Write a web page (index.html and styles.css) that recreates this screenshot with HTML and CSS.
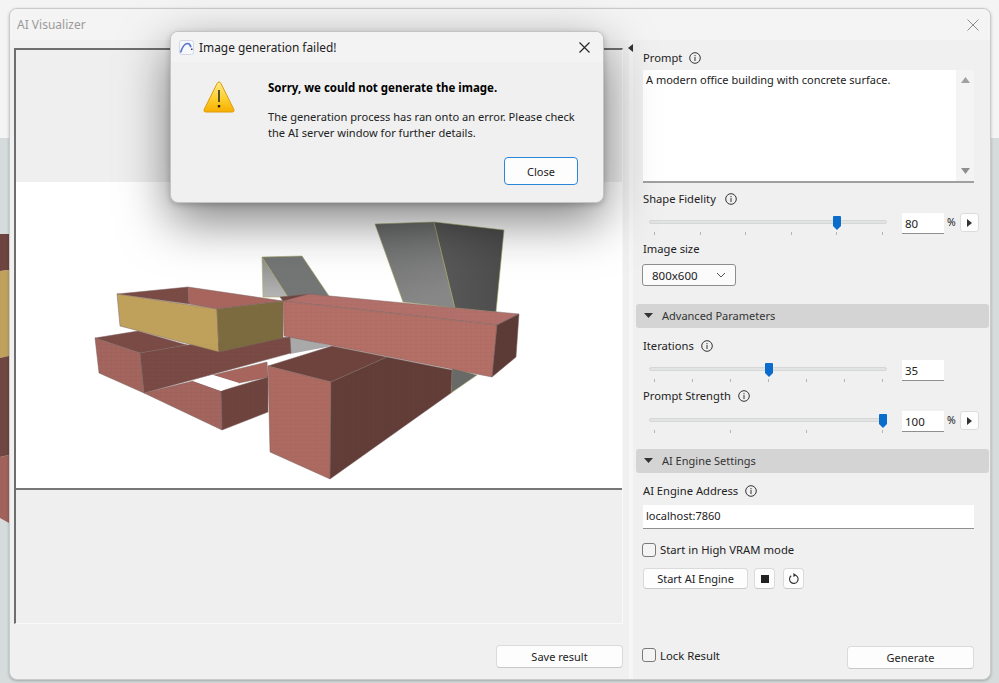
FILE: index.html
```html
<!DOCTYPE html>
<html lang="en">
<head>
<meta charset="utf-8">
<title>AI Visualizer</title>
<link rel="stylesheet" href="styles.css">
</head>
<body>
<svg class="backdrop" width="9" height="300" viewBox="0 234 9 300">
  <polygon points="0,234 9,234 9,270 0,271" fill="#6d4440"/>
  <polygon points="0,271 9,270 9,356 0,358" fill="#bfa15c"/>
  <polygon points="0,358 9,356 9,455 0,457" fill="#6f4642"/>
  <polygon points="0,457 9,455 9,523 0,518" fill="#a0625b"/>
</svg>
<main class="window">
  <header class="titlebar">
    <span class="title">AI Visualizer</span>
    <svg class="win-close" width="12" height="12" viewBox="0 0 12 12"><path d="M.5.5l11 11M11.5.5l-11 11" stroke="#8d8d8d" stroke-width="1" fill="none"/></svg>
  </header>
  <div class="body">
    <section class="left">
      <div class="preview">
        <div class="preview-top"></div>
        <svg class="scene" width="606" height="306" viewBox="16 182 606 306">
          <defs>
            <pattern id="brick" width="5" height="4" patternUnits="userSpaceOnUse">
              <path d="M0 .5h5M1 1v3" stroke="#000" stroke-opacity=".02" stroke-width="1"/>
            </pattern>
            <linearGradient id="g1" x1="0" y1="0" x2=".3" y2="1"><stop offset="0" stop-color="#6a6b6b"/><stop offset="1" stop-color="#878787"/></linearGradient>
            <linearGradient id="g2" x1="0" y1="0" x2="1" y2="0"><stop offset="0" stop-color="#5a5a5a"/><stop offset="1" stop-color="#4c4c4c"/></linearGradient>
            <linearGradient id="g3" x1="0" y1="0" x2="0" y2="1"><stop offset="0" stop-color="#8e8e8e"/><stop offset="1" stop-color="#b4b4b4"/></linearGradient>
          </defs>
          <g stroke="#a9a96a" stroke-width=".6" stroke-linejoin="round">
            <polygon points="262,257 288,297 263,297" fill="url(#g3)"/>
            <polygon points="262,257 302,256 329,296 288,297" fill="#747575"/>
            <polygon points="375,224 434,222 455,308 403,302" fill="url(#g1)"/>
            <polygon points="434,222 504,230 496,312 455,308" fill="url(#g2)"/>
            <polygon points="452,368 477,375 451,393" fill="#686a68"/>
          </g>
          <polygon points="290,336 332,346 290,354" fill="#a9a9a9"/>
          <polygon points="265,360 283,354 288,358 268,364" fill="#fff"/>
          <g stroke="#7a6462" stroke-width=".5" stroke-linejoin="round">
            <polygon points="95,338 138,331 187,345 140,353" fill="#7a4a45"/>
            <polygon points="95,338 140,353 144,393 99,373" fill="#a3655d"/>
            <polygon points="140,353 187,345 290,337 291,353 144,393" fill="#7a4a45"/>
            <polygon points="213,375 267,362 268,377 239,383" fill="#a8655d"/>
            <polygon points="144,393 193,381 221,391 222,430" fill="#a3655d"/>
            <polygon points="221,391 268,377 268,412 222,430" fill="#6f443f"/>
          </g>
          <polygon points="193,381 213,375 239,383 221,391" fill="#fff"/>
          <g stroke="#7a6462" stroke-width=".5" stroke-linejoin="round">
            <polygon points="117,294 188,287 189,304" fill="#7a4a45"/>
            <polygon points="188,287 283,301 217,309 189,304" fill="#a8655d"/>
            <polygon points="117,294 217,309 219,352 120,326" fill="#bfa15c"/>
            <polygon points="217,309 283,301 283,338 219,352" fill="#7d6b40"/>
            <polygon points="268,366 332,346 387,357 331,382" fill="#6f433d"/>
            <polygon points="268,366 331,382 330,479 270,452" fill="#ad6a60"/>
            <polygon points="331,382 387,357 452,370 451,393 330,479" fill="#633e39"/>
            <polygon points="280,297 309,294 309,301 283,301" fill="#6f443f"/>
            <polygon points="309,294 519,314 497,325 283,301" fill="#b3706a"/>
            <polygon points="283,301 497,325 492,377 284,336" fill="#b46f66"/>
            <polygon points="497,325 519,314 516,357 492,377" fill="#5c3a36"/>
          </g>
          <g fill="url(#brick)">
            <polygon points="95,338 140,353 144,393 99,373"/>
            <polygon points="140,353 187,345 290,337 291,353 144,393"/>
            <polygon points="144,393 193,381 221,391 222,430"/>
            <polygon points="221,391 268,377 268,412 222,430"/>
            <polygon points="268,366 331,382 330,479 270,452"/>
            <polygon points="331,382 387,357 452,370 451,393 330,479"/>
            <polygon points="283,301 497,325 492,377 284,336"/>
            <polygon points="309,294 519,314 497,325 283,301"/>
          </g>
        </svg>
        <div class="preview-bottom"></div>
      </div>
      <footer class="left-foot"><button class="btn btn-save">Save result</button></footer>
    </section>
    <div class="splitter"><svg width="5" height="8" viewBox="0 0 5 8"><polygon points="5,0 5,8 0,4" fill="#333"/></svg></div>
    <aside class="panel">
      <div class="label first">Prompt<svg class="info i-prompt" viewBox="0 0 12 12"><circle cx="6" cy="6" r="5.3" fill="none" stroke="#333"/><path d="M6 5v4M6 3v1.2" stroke="#333" fill="none"/></svg></div>
      <div class="prompt">
        <p class="prompt-text">A modern office building with concrete surface.</p>
        <div class="scroll">
          <svg width="9" height="6" viewBox="0 0 9 6"><polygon points="4.5,0 9,6 0,6" fill="#a0a0a0"/></svg>
          <svg width="9" height="6" viewBox="0 0 9 6"><polygon points="0,0 9,0 4.5,6" fill="#8f8f8f"/></svg>
        </div>
      </div>
      <div class="label m7">Shape Fidelity<svg class="info i-wide" viewBox="0 0 12 12"><circle cx="6" cy="6" r="5.3" fill="none" stroke="#333"/><path d="M6 5v4M6 3v1.2" stroke="#333" fill="none"/></svg></div>
      <div class="slider-row m5">
        <div class="slider">
          <div class="track"></div>
          <div class="ticks"><i></i><i></i><i></i><i></i><i></i><i></i></div>
          <div class="thumb-zone"><svg class="thumb" style="left:80%" width="8" height="14" viewBox="0 0 8 14"><path d="M1 0h6a1 1 0 0 1 1 1v9l-4 4-4-4V1a1 1 0 0 1 1-1z" fill="#0a6ccb"/></svg></div>
        </div>
        <div class="num">80</div><span class="pct">%</span><button class="step"><svg width="5" height="8" viewBox="0 0 5 8"><polygon points="0,0 5,4 0,8" fill="#333"/></svg></button>
      </div>
      <div class="label m5">Image size</div>
      <div class="select">800x600<svg width="10" height="6" viewBox="0 0 10 6"><path d="M1 1l4 4 4-4" stroke="#555" fill="none"/></svg></div>
      <div class="section m18"><svg width="9" height="5" viewBox="0 0 9 5"><polygon points="0,0 9,0 4.5,5" fill="#333"/></svg>Advanced Parameters</div>
      <div class="label m9">Iterations<svg class="info i-prompt" viewBox="0 0 12 12"><circle cx="6" cy="6" r="5.3" fill="none" stroke="#333"/><path d="M6 5v4M6 3v1.2" stroke="#333" fill="none"/></svg></div>
      <div class="slider-row m5">
        <div class="slider">
          <div class="track"></div>
          <div class="ticks"><i></i><i></i><i></i><i></i><i></i><i></i><i></i></div>
          <div class="thumb-zone"><svg class="thumb" style="left:50%" width="8" height="14" viewBox="0 0 8 14"><path d="M1 0h6a1 1 0 0 1 1 1v9l-4 4-4-4V1a1 1 0 0 1 1-1z" fill="#0a6ccb"/></svg></div>
        </div>
        <div class="num">35</div>
      </div>
      <div class="label m5">Prompt Strength<svg class="info i-prompt" viewBox="0 0 12 12"><circle cx="6" cy="6" r="5.3" fill="none" stroke="#333"/><path d="M6 5v4M6 3v1.2" stroke="#333" fill="none"/></svg></div>
      <div class="slider-row m6">
        <div class="slider">
          <div class="track"></div>
          <div class="ticks"><i></i><i></i><i></i><i></i></div>
          <div class="thumb-zone"><svg class="thumb" style="left:100%" width="8" height="14" viewBox="0 0 8 14"><path d="M1 0h6a1 1 0 0 1 1 1v9l-4 4-4-4V1a1 1 0 0 1 1-1z" fill="#0a6ccb"/></svg></div>
        </div>
        <div class="num">100</div><span class="pct">%</span><button class="step"><svg width="5" height="8" viewBox="0 0 5 8"><polygon points="0,0 5,4 0,8" fill="#333"/></svg></button>
      </div>
      <div class="section m16"><svg width="9" height="5" viewBox="0 0 9 5"><polygon points="0,0 9,0 4.5,5" fill="#333"/></svg>AI Engine Settings</div>
      <div class="label m9">AI Engine Address<svg class="info i-prompt" viewBox="0 0 12 12"><circle cx="6" cy="6" r="5.3" fill="none" stroke="#333"/><path d="M6 5v4M6 3v1.2" stroke="#333" fill="none"/></svg></div>
      <div class="address">localhost:7860</div>
      <label class="check m13"><span class="box"></span>Start in High VRAM mode</label>
      <div class="engine">
        <button class="btn btn-start">Start AI Engine</button>
        <button class="btn btn-icon"><svg width="8" height="8" viewBox="0 0 8 8"><rect width="8" height="8" fill="#222"/></svg></button>
        <button class="btn btn-icon"><svg width="12" height="12" viewBox="0 0 12 12"><path d="M7.6 2.2A4.3 4.3 0 1 1 3.2 2.7" fill="none" stroke="#333" stroke-width="1.1"/><polygon points="5.4,0 8.6,2.2 5.4,4" fill="#333"/></svg></button>
      </div>
      <div class="panel-foot">
        <label class="check"><span class="box"></span>Lock Result</label>
        <button class="btn btn-wide">Generate</button>
      </div>
    </aside>
  </div>
</main>
<div class="dialog" role="alertdialog">
  <header class="dialog-bar">
    <svg class="logo" width="15" height="15" viewBox="0 0 15 15"><rect x=".5" y=".5" width="14" height="14" rx="2" fill="#f7f8fb" stroke="#d5d8e2"/><path d="M1.5 12.5C3 8 5 3.5 8.500 3.500c2 0 3 2 3.400 3.800" fill="none" stroke="#5877cf" stroke-width="1.700"/><rect x="12" y="8.500" width="1.500" height="1.500" fill="#2c3b6b"/></svg>
    <span class="dialog-title">Image generation failed!</span>
    <svg class="dialog-x" width="11" height="11" viewBox="0 0 11 11"><path d="M.5.5l10 10M10.5.5l-10 10" stroke="#222" stroke-width="1.100" fill="none"/></svg>
  </header>
  <div class="dialog-body">
    <svg class="warn" width="32" height="32" viewBox="0 0 32 32">
      <defs><linearGradient id="wg" x1="0" y1="0" x2="0" y2="1"><stop offset="0" stop-color="#ffe98a"/><stop offset=".55" stop-color="#fdd02e"/><stop offset="1" stop-color="#f7ae00"/></linearGradient></defs>
      <path d="M16 1c.9 0 1.400.5 1.900 1.400l12.900 26c.7 1.400 0 2.600-1.600 2.600H2.800c-1.600 0-2.300-1.200-1.600-2.600l12.900-26C14.600 1.500 15.100 1 16 1z" fill="url(#wg)" stroke="#dc9a0c"/>
      <path d="M16 9v12" stroke="#222" stroke-width="1.500"/><rect x="14.800" y="24" width="2.400" height="2.400" fill="#222"/>
    </svg>
    <div class="dialog-copy">
      <strong class="dialog-head">Sorry, we could not generate the image.</strong>
      <p class="dialog-msg">The generation process has ran onto an error. Please check<br>the AI server window for further details.</p>
      <div class="dialog-actions"><button class="btn btn-primary">Close</button></div>
    </div>
  </div>
</div>
</body>
</html>
```

FILE: styles.css
```css
* { box-sizing: border-box; }
html, body { margin: 0; height: 100%; }
body {
  width: 999px;
  height: 683px;
  overflow: hidden;
  position: relative;
  padding: 8px 8px 3px 9px;
  background: linear-gradient(#f4f4f4 0, #f4f4f4 138px, #d6dcdc 138px, #d6dcdc 100%);
  font-family: "Noto Sans", "Liberation Sans", sans-serif;
  font-size: 11px;
  color: #222;
}
button { font: inherit; color: inherit; padding: 0; cursor: default; }
.backdrop { position: absolute; left: 0; top: 234px; }

.window {
  position: relative;
  height: 672px;
  display: flex;
  flex-direction: column;
  background: #f0f0f0;
  border: 1px solid #c9cccc;
  border-radius: 8px;
  box-shadow: 0 1px 3px rgba(0,0,0,.25);
  overflow: hidden;
}
.titlebar {
  flex: 0 0 31px;
  display: flex;
  align-items: center;
  justify-content: space-between;
  padding: 0 11px 0 7px;
  background: #f4f4f4;
}
.title { color: #9a9a9a; font-size: 12px; }
.body { flex: 1; display: flex; min-height: 0; }

.left { width: 613px; display: flex; flex-direction: column; padding: 8px 0 11px 4px; }
.preview {
  width: 609px;
  height: 576px;
  display: flex;
  flex-direction: column;
  border-top: 2px solid #6e6e6e;
  border-left: 2px solid #6e6e6e;
  border-right: 1px solid #f9f9f9;
  border-bottom: 1px solid #f9f9f9;
  background: #efefef;
}
.preview-top { flex: 0 0 132px; }
.scene { display: block; flex: 0 0 306px; background: #fff; }
.preview-bottom { flex: 1; border-top: 2px solid #777; }
.left-foot { margin-top: auto; display: flex; justify-content: flex-end; }

.splitter {
  width: 10px;
  padding: 3px 0 0 6px;
  line-height: 0;
  background: linear-gradient(90deg, #f0f0f0 0 6px, #f6f6f6 6px);
}
.splitter svg { margin-top: 1px; margin-left: -1px; }

.panel { flex: 1; display: flex; flex-direction: column; padding: 9px 16px 10px 10px; min-width: 0; }
.label { height: 18px; line-height: 18px; display: flex; align-items: center; white-space: pre; font-size: 11.200px; }
.info { width: 12px; height: 12px; margin-left: 7px; }
.i-wide { margin-left: 9px; }
.m5 { margin-top: 5px; } .m6 { margin-top: 6px; } .m7 { margin-top: 7px; }
.m9 { margin-top: 9px; } .m13 { margin-top: 13px; }

.prompt {
  margin-top: 3px;
  height: 113px;
  display: flex;
  justify-content: space-between;
  background: #fff;
  border-bottom: 2px solid #a0a0a0;
}
.prompt-text { margin: 0; padding: 2px 3px; line-height: 16px; }
.scroll {
  width: 18px;
  background: #f4f4f4;
  display: flex;
  flex-direction: column;
  justify-content: space-between;
  align-items: center;
  padding: 7px 0 7px;
}

.slider-row { height: 22px; display: flex; align-items: flex-start; width: 337px; }
.slider { position: relative; width: 259px; height: 22px; }
.track {
  position: absolute; left: 6px; width: 238px; top: 7px; height: 4px;
  background: #e2e4e4; border: 1px solid #d6d8d8; border-radius: 2px;
}
.ticks { position: absolute; left: 11px; width: 229px; top: 19px; display: flex; justify-content: space-between; }
.ticks i { width: 1px; height: 3px; background: #b5b5b5; }
.thumb-zone { position: absolute; left: 11px; width: 229px; top: 3px; height: 14px; }
.thumb { position: absolute; margin-left: -4px; top: 0; }
.num {
  width: 42px; height: 21px; line-height: 21px; padding-left: 3px; font-size: 11.500px;
  background: #fff; border-bottom: 1px solid #8f8f8f;
}
.pct { margin: 0 5px 0 3px; line-height: 19px; width: 8px; font-size: 10.500px; }
.step {
  width: 19px; height: 19px; display: flex; align-items: center; justify-content: center;
  background: #fdfdfd; border: 1px solid #dcdcdc; border-radius: 3px;
}

.select {
  margin-top: 6px; width: 94px; height: 22px; padding: 0 9px; margin-left: -1px; font-size: 11.500px;
  display: flex; align-items: center; justify-content: space-between;
  background: #fbfbfb; border: 1px solid #8d8d8d; border-radius: 3px;
}
.section {
  height: 24px; margin: 0 -15px 0 -7px; padding: 0 0 1px 8px;
  display: flex; align-items: center; gap: 9px;
  background: #d4d4d4; border-radius: 3px; color: #333;
}
.section.m18 { margin-top: 18px; }
.section.m16 { margin-top: 16px; }

.address {
  margin-top: 5px; height: 24px; line-height: 22px; padding-left: 3px;
  background: #fff; border-bottom: 1px solid #8f8f8f;
}
.check { display: flex; align-items: center; height: 15px; margin-left: -1px; white-space: nowrap; font-size: 11.300px; }
.box {
  width: 14px; height: 14px; margin-right: 4px;
  border: 1px solid #7a7a7a; border-radius: 3px; background: #f4f4f4;
}
.btn {
  background: #fdfdfd; border: 1px solid #dadada; border-bottom-color: #c8c8c8; border-radius: 4px;
  display: flex; align-items: center; justify-content: center;
}
.btn-wide { width: 127px; height: 23px; }
.btn-save { width: 127px; height: 23px; }
.engine { margin-top: 11px; display: flex; }
.btn-start { width: 105px; height: 21px; margin-right: 6px; }
.btn-icon { width: 21px; height: 21px; margin-right: 8px; }
.panel-foot { margin-top: auto; display: flex; justify-content: space-between; align-items: center; }
.panel-foot .check { margin-top: -5px; }

.dialog {
  position: absolute; left: 170px; top: 31px; width: 434px; height: 172px;
  background: #f0f0f0; border: 1px solid #c4c4c4; border-radius: 8px;
  box-shadow: 0 18px 50px rgba(0,0,0,.5), 0 2px 6px rgba(0,0,0,.2);
  overflow: hidden;
}
.dialog-bar {
  height: 30px; display: flex; align-items: center; padding: 0 13px 0 8px; background: #f3f3f3;
}
.logo { margin-right: 5px; }
.dialog-title { flex: 1; font-size: 11.900px; color: #222; }
.dialog-body { display: flex; padding: 18px 25px 0 32px; }
.warn { flex: none; margin: 1px 33px 0 0; }
.dialog-copy { flex: 1; }
.dialog-head { display: block; font-weight: 700; font-size: 11.500px; color: #000; line-height: 16px; }
.dialog-msg { margin: 13px 0 0; line-height: 16px; font-size: 11.100px; }
.dialog-actions { display: flex; justify-content: flex-end; margin-top: 16px; }
.btn-primary { width: 74px; height: 28px; border: 1.500px solid #2a86d8; border-radius: 4px; }
```
